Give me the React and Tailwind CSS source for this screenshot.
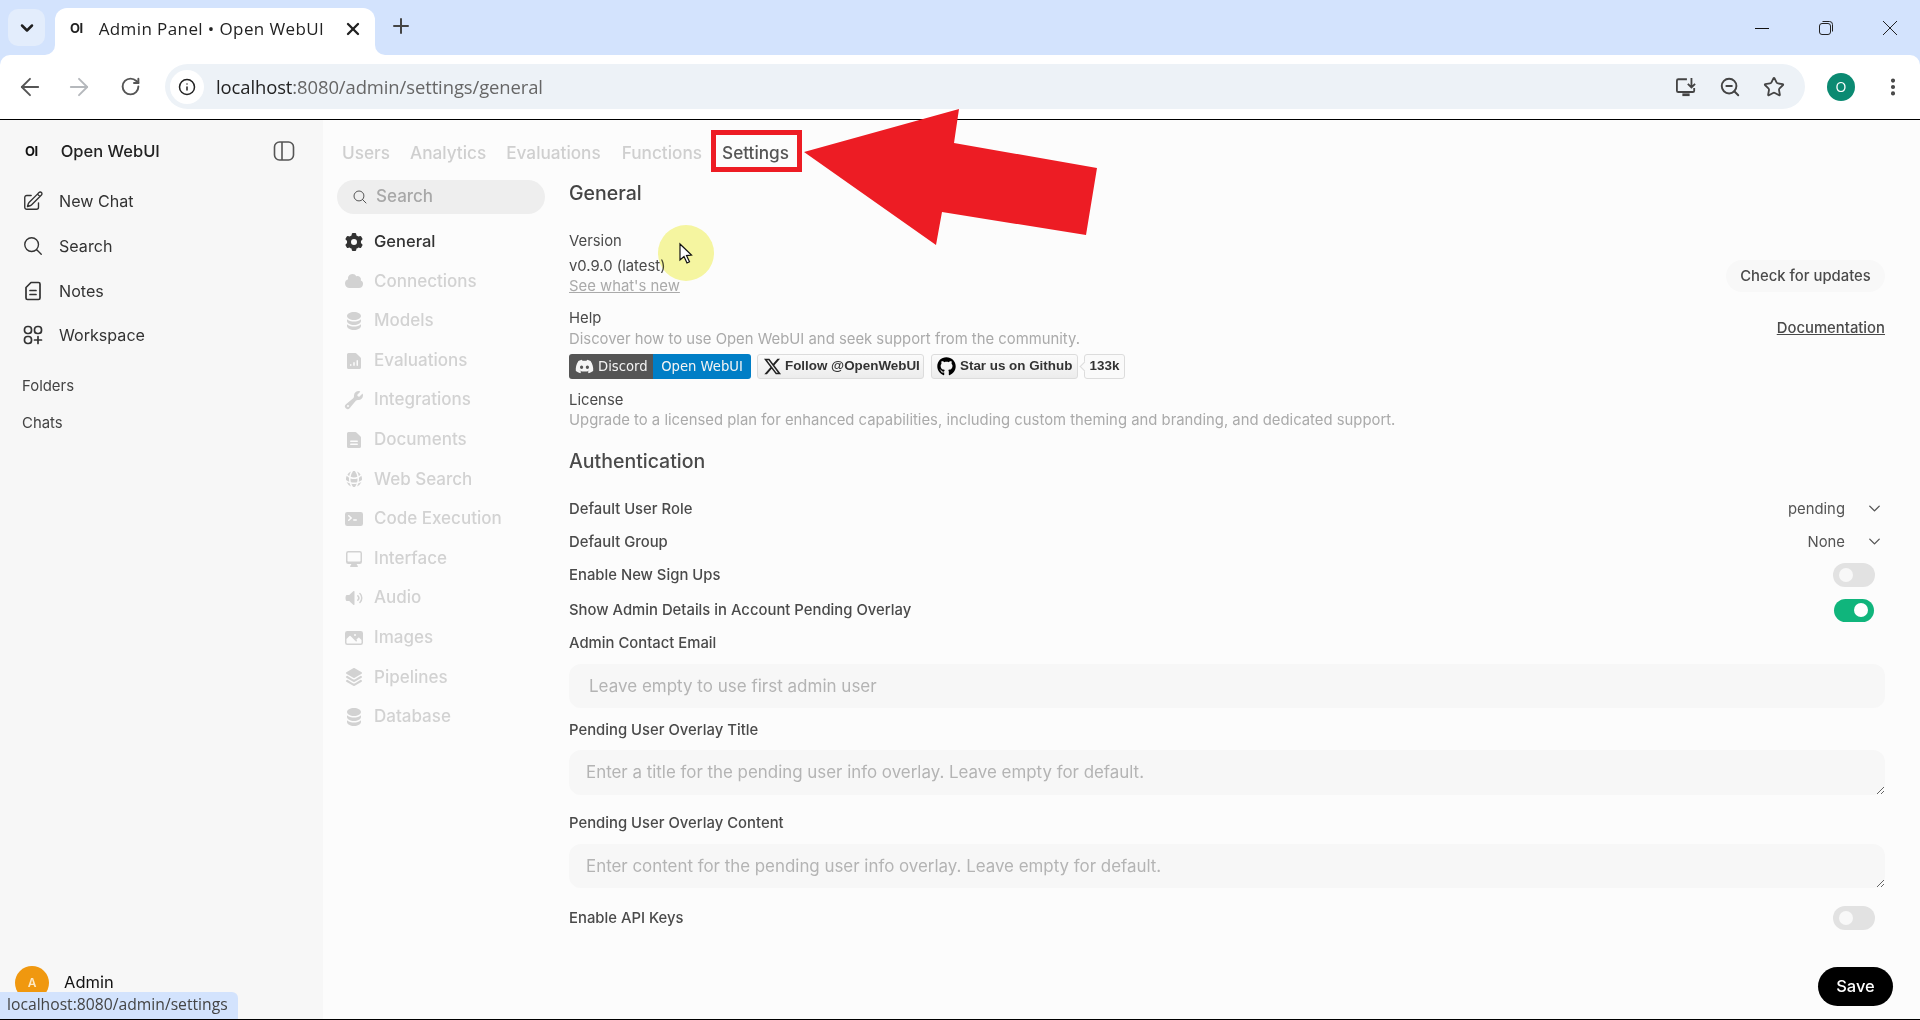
import { ArrowLeft, ArrowRight, RotateCw, Info, Star, ZoomOut, X, Plus, ChevronDown, EllipsisVertical } from "lucide-react";
import {
  HiOutlinePencilSquare,
  HiOutlineMagnifyingGlass,
  HiMiniCog6Tooth,
  HiMiniCloud,
  HiMiniCircleStack,
  HiMiniDocumentChartBar,
  HiMiniWrench,
  HiMiniDocumentText,
  HiMiniGlobeAlt,
  HiMiniCommandLine,
  HiMiniComputerDesktop,
  HiMiniSpeakerWave,
  HiMiniPhoto,
  HiMiniSquare3Stack3D,
} from "react-icons/hi2";
import { FaDiscord, FaGithub } from "react-icons/fa";
import { FaXTwitter } from "react-icons/fa6";

const inter = "font-['Inter',sans-serif]";
const chrome = "font-['Open_Sans',sans-serif]";

const NotesIcon = ({ className }) => (
  <svg viewBox="0 0 22 22" className={className} fill="none" stroke="currentColor" strokeWidth="1.7" strokeLinecap="round" strokeLinejoin="round">
    <path d="M9 2.5h7.5a1.5 1.5 0 0 1 1.5 1.5v14a1.5 1.5 0 0 1-1.5 1.5h-11A1.5 1.5 0 0 1 4 18V7.5z" />
    <path d="M8 10.5h6M8 14.5h6" />
  </svg>
);

const WorkspaceIcon = ({ className }) => (
  <svg viewBox="0 0 22 22" className={className} fill="none" stroke="currentColor" strokeWidth="1.7" strokeLinecap="round">
    <rect x="2.5" y="2.5" width="7" height="7" rx="3" />
    <rect x="12.5" y="2.5" width="7" height="7" rx="3" />
    <rect x="2.5" y="12.5" width="7" height="7" rx="3" />
    <path d="M16 12.5v7M12.5 16h7" />
  </svg>
);

const navItems = [
  ["General", HiMiniCog6Tooth],
  ["Connections", HiMiniCloud],
  ["Models", HiMiniCircleStack],
  ["Evaluations", HiMiniDocumentChartBar],
  ["Integrations", HiMiniWrench],
  ["Documents", HiMiniDocumentText],
  ["Web Search", HiMiniGlobeAlt],
  ["Code Execution", HiMiniCommandLine],
  ["Interface", HiMiniComputerDesktop],
  ["Audio", HiMiniSpeakerWave],
  ["Images", HiMiniPhoto],
  ["Pipelines", HiMiniSquare3Stack3D],
  ["Database", HiMiniCircleStack],
];

const sideLinks = [
  ["New Chat", HiOutlinePencilSquare],
  ["Search", HiOutlineMagnifyingGlass],
  ["Notes", NotesIcon],
  ["Workspace", WorkspaceIcon],
];

const OiLogo = ({ className }) => (
  <span className={`font-bold leading-none tracking-[-0.5px] ${className}`}>OI</span>
);

const Toggle = ({ on }) =>
  on ? (
    <div className="flex h-[23px] w-[40px] items-center justify-end rounded-full bg-[#10b57c] px-[6px]">
      <div className="size-[14px] rounded-full bg-white" />
    </div>
  ) : (
    <div className="flex h-[24px] w-[42px] items-center rounded-full bg-[#e2e2e2] px-[6px]">
      <div className="size-[14px] rounded-full bg-[#f8f8f8]" />
    </div>
  );

const SelectValue = ({ value }) => (
  <div className="flex items-center text-[#555]">
    <span>{value}</span>
    <ChevronDown className="ml-[20px] mr-[1px] size-[19px]" strokeWidth={1.7} />
  </div>
);

const Browser = () => (
  <>
    {/* Tab strip */}
    <div className={`relative flex h-[55px] shrink-0 items-end bg-[#d3e3fd] ${chrome}`}>
      <div className="mb-[9px] ml-[8px] flex size-[37px] items-center justify-center rounded-[10px] bg-[#e3edfc]">
        <ChevronDown className="size-[20px] text-[#1f1f1f]" strokeWidth={3} />
      </div>
      <div className="relative ml-[10px] flex h-[47px] w-[320px] items-center rounded-t-[12px] bg-white pb-[6px] pl-[15px] pr-[12px]">
        <div className="absolute bottom-0 left-[-10px] size-[10px] bg-white">
          <div className="size-full rounded-br-[10px] bg-[#d3e3fd]" />
        </div>
        <div className="absolute bottom-0 right-[-10px] size-[10px] bg-white">
          <div className="size-full rounded-bl-[10px] bg-[#d3e3fd]" />
        </div>
        <OiLogo className={`text-[13px] text-[#222] ${inter}`} />
        <span className="ml-[16px] flex-1 text-[17px] tracking-[0.4px] text-[#222]">Admin Panel • Open WebUI</span>
        <X className="size-[20px] text-[#222]" strokeWidth={2.8} />
      </div>
      <Plus className="mb-[17px] ml-[14px] size-[24px] text-[#444]" strokeWidth={2} />
      <div className="flex-1" />
      <div className="mb-[19px] mr-[23px] flex items-center">
        <div className="h-px w-[14px] bg-[#111]" />
        <svg viewBox="0 0 16 16" className="ml-[49px] size-[16px]" fill="none" stroke="#222" strokeWidth="1">
          <rect x="1.5" y="3.5" width="11" height="11" rx="2.5" />
          <path d="M4.5 1.5h7a3 3 0 0 1 3 3v7" />
        </svg>
        <svg viewBox="0 0 14 14" className="ml-[49px] size-[14px]" fill="none" stroke="#222" strokeWidth="1">
          <path d="M0 0l14 14M14 0L0 14" />
        </svg>
      </div>
    </div>

    {/* Toolbar */}
    <div className={`flex h-[63.5px] shrink-0 items-center rounded-t-[10px] bg-white pl-[16px] ${chrome}`}>
      <ArrowLeft className="size-[28px] text-[#555]" strokeWidth={1.6} />
      <ArrowRight className="ml-[21px] size-[28px] text-[#b5b8bc]" strokeWidth={1.6} />
      <RotateCw className="ml-[27px] size-[21px] text-[#555]" strokeWidth={2.2} />
      <div className="ml-[24px] flex h-[45px] w-[1640px] items-center rounded-full bg-[#edf2f7] pl-[5px] pr-[20px]">
        <div className="flex size-[34px] items-center justify-center rounded-full bg-white">
          <Info className="size-[18px] text-[#222]" strokeWidth={2} />
        </div>
        <span className="ml-[12px] text-[18.45px] tracking-[-0.1px] text-[#666]">
          <span className="text-[#222]">localhost</span>:8080/admin/settings/general
        </span>
        <div className="flex-1" />
        <svg viewBox="0 0 24 22" className="h-[20px] w-[22px]" fill="none" stroke="#444" strokeWidth="2">
          <path d="M21 12v3a1.5 1.5 0 0 1-1.5 1.5h-16A1.5 1.5 0 0 1 2 15V4a1.5 1.5 0 0 1 1.5-1.5H13" />
          <path d="M18 1v10M14 7.5l4 4 4-4" />
          <path d="M8 19.5h8" strokeWidth="3" />
        </svg>
        <ZoomOut className="ml-[22px] size-[22px] text-[#444]" strokeWidth={2.1} />
        <Star className="ml-[22px] size-[22px] text-[#444]" strokeWidth={2} />
      </div>
      <div className="ml-[22px] flex size-[28px] items-center justify-center rounded-full bg-[#0b8a72] text-[14px] text-white">O</div>
      <EllipsisVertical className="ml-[27px] size-[22px] text-[#444]" strokeWidth={2.5} />
    </div>
    <div className="h-[1.5px] shrink-0 bg-black" />
  </>
);

const Sidebar = () => (
  <aside className="flex w-[323px] shrink-0 flex-col bg-[#f7f7f7] pl-[22px]">
    <div className="mt-[21px] flex h-[20px] items-center">
      <OiLogo className="ml-[3px] text-[13px] text-[#111]" />
      <span className="ml-[23px] text-[16.5px] font-medium text-[#222]">Open WebUI</span>
      <svg viewBox="0 0 22 22" className="ml-[113px] size-[22px]" fill="none" stroke="#555" strokeWidth="1.6">
        <rect x="1.5" y="2" width="19" height="18" rx="5" />
        <path d="M9 2v18" />
      </svg>
    </div>
    <div className="mt-[18px] flex flex-col">
      {sideLinks.map(([label, Icon]) => (
        <div key={label} className="flex h-[44.7px] items-center">
          <Icon className="size-[22px] text-[#333]" />
          <span className="ml-[15px] text-[16.1px] text-[#333]">{label}</span>
        </div>
      ))}
    </div>
    <div className="mt-[17px] text-[14.9px] text-[#444]">Folders</div>
    <div className="mt-[15px] text-[14.9px] text-[#444]">Chats</div>
    <div className="flex-1" />
    <div className="mb-[19px] ml-[-7px] flex items-center">
      <div className="flex size-[34px] items-center justify-center rounded-full bg-[#f0980f] text-[12px] font-semibold text-[#fde9c4]">A</div>
      <span className="ml-[15px] text-[16.5px] text-[#111]">Admin</span>
    </div>
  </aside>
);

const Badges = () => (
  <div className="mt-[5px] flex h-[25px] items-stretch whitespace-nowrap font-['Liberation_Sans',sans-serif] text-[13.4px]">
    <div className="flex w-[182px] overflow-hidden rounded-[3px] font-['DejaVu_Sans',sans-serif] text-[13.2px] text-[#f4f4f4]">
      <div className="flex w-[84px] items-center bg-[#555] pl-[6px]">
        <FaDiscord className="size-[19px] shrink-0" />
        <span className="ml-[4px]">Discord</span>
      </div>
      <div className="flex flex-1 items-center justify-center bg-[#007ec6]">Open WebUI</div>
    </div>
    <div className="ml-[6px] flex w-[167px] items-center rounded-[3px] border border-[#dcdcdc] bg-linear-to-b from-[#fbfbfb] to-[#ececec] pl-[5px] font-bold text-[#333]">
      <FaXTwitter className="size-[19px] shrink-0 text-[#222]" />
      <span className="ml-[3px]">Follow @OpenWebUI</span>
    </div>
    <div className="ml-[7px] flex w-[147px] items-center rounded-[3px] border border-[#dcdcdc] bg-linear-to-b from-[#fbfbfb] to-[#ececec] pl-[5px] font-bold text-[#333]">
      <FaGithub className="size-[19px] shrink-0 text-black" />
      <span className="ml-[4px]">Star us on Github</span>
    </div>
    <div className="relative ml-[6px] flex w-[41px] items-center justify-center rounded-[3px] border border-[#dcdcdc] bg-[#fafafa] font-bold text-[#333]">
      <div className="absolute left-[-4px] top-[8px] size-[7px] rotate-45 border-b border-l border-[#dcdcdc] bg-[#fafafa]" />
      133k
    </div>
  </div>
);

const Settings = () => (
  <div className="relative flex min-w-0 flex-1 flex-col bg-[#fcfcfc]">
    <div className="flex h-[60px] shrink-0 items-center pl-[19px] pt-[6px] text-[17.2px] font-medium text-[#cfcfcf]">
      <span>Users</span>
      <span className="ml-[20px]">Analytics</span>
      <span className="ml-[20px]">Evaluations</span>
      <span className="ml-[21px]">Functions</span>
      <span className="ml-[20px] text-[#555]">Settings</span>
    </div>
    <div className="flex min-h-0 flex-1">
      {/* Section list */}
      <div className="w-[246px] shrink-0 pl-[14px]">
        <div className="flex h-[34px] w-[208px] items-center rounded-full bg-[#eeeeee] pb-[1px] pl-[15px]">
          <HiOutlineMagnifyingGlass className="size-[16px] text-[#555]" />
          <span className="ml-[8px] text-[17px] font-medium text-[#a8a8a8]">Search</span>
        </div>
        <div className="mt-[8px] flex flex-col pl-[7px]">
          {navItems.map(([label, Icon], i) => (
            <div key={label} className={`flex h-[39.6px] items-center ${i === 0 ? "text-[#333]" : "text-[#d2d2d2]"}`}>
              <Icon className="size-[20px]" />
              <span className={`ml-[10px] font-medium ${i === 0 ? "text-[16.5px]" : "text-[17px]"}`}>{label}</span>
            </div>
          ))}
        </div>
      </div>

      {/* Section body */}
      <div className="min-w-0 flex-1 pr-[35px] pt-[1px] text-[14.85px] text-[#4a4a4a]">
        <div className="h-[24px] text-[19.5px] font-medium leading-[24px] text-[#444]">General</div>

        <div className="mt-[26px] h-[20px] leading-[20px]">Version</div>
        <div className="mt-[5px] flex items-center justify-between">
          <div>
            <div className="h-[20px] leading-[20px]">v0.9.0 (latest)</div>
            <div className="h-[20px] leading-[20px] text-[#aaa] underline">See what's new</div>
          </div>
          <div className="flex h-[32px] w-[159px] items-center justify-center rounded-full bg-[#f8f8f8] font-medium">Check for updates</div>
        </div>

        <div className="mt-[12px] flex items-center justify-between">
          <div>
            <div className="h-[21px] leading-[20px]">Help</div>
            <div className="h-[20px] leading-[20px] text-[#aaa]">Discover how to use Open WebUI and seek support from the community.</div>
          </div>
          <div className="font-medium underline">Documentation</div>
        </div>
        <Badges />

        <div className="mt-[11px] h-[20px] leading-[20px]">License</div>
        <div className="h-[20px] leading-[20px] text-[#aaa]">Upgrade to a licensed plan for enhanced capabilities, including custom theming and branding, and dedicated support.</div>

        <div className="mt-[19px] h-[24px] text-[19.5px] font-medium leading-[24px]">Authentication</div>

        <div className="mt-[22px] flex h-[28px] items-center justify-between">
          <span className="font-medium">Default User Role</span>
          <SelectValue value="pending" />
        </div>
        <div className="mt-[5px] flex h-[28px] items-center justify-between">
          <span className="font-medium">Default Group</span>
          <SelectValue value="None" />
        </div>
        <div className="mt-[5px] flex h-[28px] items-center justify-between pr-[10px]">
          <span className="font-medium">Enable New Sign Ups</span>
          <Toggle />
        </div>
        <div className="mt-[7px] flex h-[28px] items-center justify-between pr-[11px]">
          <span className="font-medium">Show Admin Details in Account Pending Overlay</span>
          <Toggle on />
        </div>

        <div className="mt-[9px] h-[20px] font-medium leading-[20px]">Admin Contact Email</div>
        <input
          readOnly
          placeholder="Leave empty to use first admin user"
          className="mt-[11px] block h-[44px] w-full rounded-xl bg-[#f7f7f7] pl-[20px] text-[17px] placeholder:text-[#b4b4b4]"
        />

        <div className="mt-[12px] h-[20px] font-medium leading-[20px]">Pending User Overlay Title</div>
        <textarea
          readOnly
          placeholder="Enter a title for the pending user info overlay. Leave empty for default."
          className="mt-[10px] block h-[45px] w-full rounded-xl bg-[#f7f7f7] py-[10px] pl-[17px] text-[16.9px] leading-[24px] placeholder:text-[#b4b4b4]"
        />

        <div className="mt-[18px] h-[20px] font-medium leading-[20px]">Pending User Overlay Content</div>
        <textarea
          readOnly
          placeholder="Enter content for the pending user info overlay. Leave empty for default."
          className="mt-[11px] block h-[44px] w-full rounded-xl bg-[#f7f7f7] py-[10px] pl-[17px] text-[16.9px] leading-[24px] placeholder:text-[#b4b4b4]"
        />

        <div className="mt-[17px] flex h-[26px] items-center justify-between pr-[10px]">
          <span className="font-medium">Enable API Keys</span>
          <Toggle />
        </div>

        <div className="mt-[36px] flex justify-end">
          <div className="mr-[-8px] flex h-[39px] w-[75px] items-center justify-center rounded-full bg-black text-[16.5px] font-medium text-white">Save</div>
        </div>
      </div>
    </div>
  </div>
);

export default function App() {
  return (
    <div className={`relative flex h-screen flex-col overflow-hidden bg-[#d3e3fd] ${inter}`}>
      <Browser />
      <div className="flex min-h-0 flex-1">
        <Sidebar />
        <Settings />
      </div>
      <div className="h-[1.5px] shrink-0 bg-black" />

      {/* Tutorial annotation drawn over the page */}
      <div className="absolute left-[711px] top-[130px] h-[42px] w-[91px] border-[5px] border-[#ed1c24]" />
      <svg className="absolute left-0 top-0 size-full" viewBox="0 0 1920 1020" fill="none">
        <polygon points="804,152 959,109 954,143 1097,168 1086,235 942,212 936,245" fill="#ed1c24" />
        <circle cx="686" cy="253" r="28" fill="#f8f8a2" className="mix-blend-multiply" />
        <path d="M680 244v16l4-3.5 3 6.5 2.5-1.2-3-6.2 5-.6z" fill="#fff" stroke="#111" strokeWidth="1.2" />
      </svg>

      {/* Link preview bubble */}
      <div className={`absolute bottom-[1.5px] left-0 flex h-[27px] w-[238px] items-center rounded-tr-[6px] bg-[#d3e3fd] pl-[7px] text-[15.7px] text-[#444] ${chrome}`}>
        localhost:8080/admin/settings
      </div>
    </div>
  );
}
